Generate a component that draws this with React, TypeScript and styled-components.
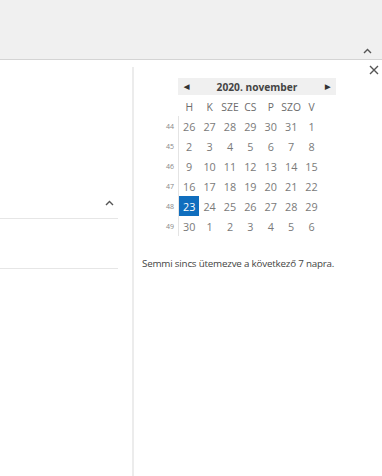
import React from "react";
import styled, { createGlobalStyle } from "styled-components";

const GlobalStyle = createGlobalStyle`
  html, body {
    margin: 0;
    padding: 0;
    background: #ffffff;
    font-family: "Open Sans", "Noto Sans", "Liberation Sans", sans-serif;
  }
`;

const Page = styled.div`
  width: 382px;
  height: 476px;
  display: flex;
  flex-direction: column;
  overflow: hidden;
`;

const TopBar = styled.div`
  height: 60px;
  background: #f0f0f0;
  border-bottom: 1px solid #d4d4d4;
  display: flex;
  align-items: flex-end;
  justify-content: flex-end;
  padding: 0 10px 5px 0;
  box-sizing: border-box;
  flex-shrink: 0;
`;

const Body = styled.div`
  flex: 1;
  display: flex;
`;

const LeftPane = styled.div`
  width: 134px;
  flex-shrink: 0;
  margin-top: 7px;
  border-right: 2px solid #ececec;
  box-sizing: border-box;
  display: flex;
  flex-direction: column;
  padding-top: 122px;
`;

const SectionHead = styled.div`
  height: 30px;
  width: 118px;
  border-bottom: 1px solid #e6e6e6;
  display: flex;
  align-items: center;
  justify-content: flex-end;
  padding: 0 4px 2px 0;
  box-sizing: border-box;
`;

const SectionBody = styled.div`
  height: 49px;
  width: 118px;
  border-bottom: 1px solid #e6e6e6;
`;

const RightPane = styled.div`
  flex: 1;
  display: flex;
  flex-direction: column;
  padding: 0 8px;
  position: relative;
`;

const CloseButton = styled.div`
  position: absolute;
  top: 4px;
  right: 2px;
  width: 12px;
  height: 12px;
  display: flex;
  align-items: center;
  justify-content: center;
`;

const MonthBar = styled.div`
  margin: 18px 0 0 36px;
  width: 158px;
  height: 17px;
  background: #f0f0f0;
  display: flex;
  align-items: center;
  justify-content: space-between;
  padding: 0 6px;
  box-sizing: border-box;
  font-size: 10.2px;
  font-weight: 700;
  color: #444;
`;

const Arrow = styled.span`
  font-size: 7px;
  color: #333;
`;

const Grid = styled.div`
  margin-left: 23px;
  display: grid;
  grid-template-columns: 14px repeat(7, 20.4px);
`;

const DayName = styled.div`
  height: 21px;
  padding-top: 3px;
  box-sizing: border-box;
  display: flex;
  align-items: center;
  justify-content: center;
  font-size: 10.3px;
  color: #6c6c6c;
`;

const WeekNo = styled.div`
  height: 20px;
  display: flex;
  align-items: center;
  justify-content: flex-start;
  padding-left: 1px;
  font-size: 7px;
  color: #888;
  border-right: 1px solid #e4e4e4;
`;

const DayCell = styled.div<{ selected?: boolean }>`
  height: 20px;
  display: flex;
  align-items: center;
  justify-content: center;
  font-size: 10.8px;
  color: ${(p) => (p.selected ? "#ffffff" : "#7a7a7a")};
  background: ${(p) => (p.selected ? "#106ebe" : "transparent")};
`;

const Agenda = styled.div`
  margin-top: 21px;
  font-size: 9.8px;
  letter-spacing: -0.2px;
  color: #444;
  white-space: nowrap;
`;

const Caret = () => (
  <svg width="9" height="6" viewBox="0 0 9 6">
    <path d="M1 5 L4.5 1.5 L8 5" fill="none" stroke="#555" strokeWidth="1.4" />
  </svg>
);

const dayNames = ["H", "K", "SZE", "CS", "P", "SZO", "V"];

const weeks: [number, number[]][] = [
  [44, [26, 27, 28, 29, 30, 31, 1]],
  [45, [2, 3, 4, 5, 6, 7, 8]],
  [46, [9, 10, 11, 12, 13, 14, 15]],
  [47, [16, 17, 18, 19, 20, 21, 22]],
  [48, [23, 24, 25, 26, 27, 28, 29]],
  [49, [30, 1, 2, 3, 4, 5, 6]],
];

const App = () => {
  return (
    <Page>
      <GlobalStyle />
      <TopBar>
        <Caret />
      </TopBar>
      <Body>
        <LeftPane>
          <SectionHead>
            <Caret />
          </SectionHead>
          <SectionBody />
        </LeftPane>
        <RightPane>
          <CloseButton>
            <svg width="10" height="10" viewBox="0 0 10 10">
              <path d="M1 1 L9 9 M9 1 L1 9" stroke="#555" strokeWidth="1.4" />
            </svg>
          </CloseButton>
          <MonthBar>
            <Arrow>◀</Arrow>
            <span>2020. november</span>
            <Arrow>▶</Arrow>
          </MonthBar>
          <Grid>
            <div />
            {dayNames.map((d) => (
              <DayName key={d}>{d}</DayName>
            ))}
            {weeks.map(([wk, days]) => (
              <React.Fragment key={wk}>
                <WeekNo>{wk}</WeekNo>
                {days.map((d, i) => (
                  <DayCell key={i} selected={wk === 48 && d === 23}>
                    {d}
                  </DayCell>
                ))}
              </React.Fragment>
            ))}
          </Grid>
          <Agenda>Semmi sincs ütemezve a következő 7 napra.</Agenda>
        </RightPane>
      </Body>
    </Page>
  );
};

export default App;
